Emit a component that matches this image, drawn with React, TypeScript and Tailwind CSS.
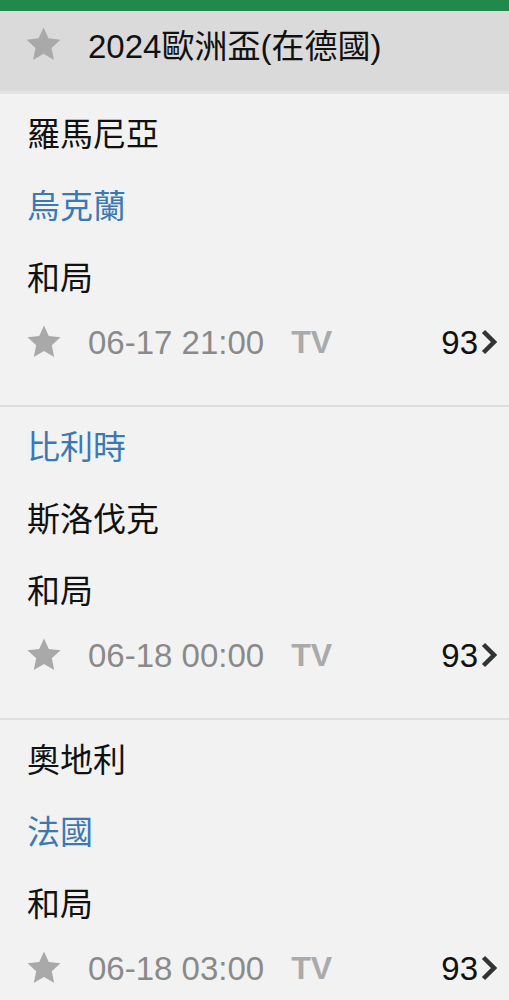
const matches = [
  { home: "羅馬尼亞", away: "烏克蘭", homeWin: false, time: "06-17 21:00" },
  { home: "比利時", away: "斯洛伐克", homeWin: true, time: "06-18 00:00" },
  { home: "奧地利", away: "法國", homeWin: false, time: "06-18 03:00" },
];

const StarIcon = ({ className }: { className?: string }) => (
  <svg viewBox="0 0 24 24" className={className}>
    <polygon
      points="12,1 15.2,8 23,8.9 17.2,14.2 18.8,22 12,18 5.2,22 6.8,14.2 1,8.9 8.8,8"
      fill="#a9a9a9"
    />
  </svg>
);

const Chevron = () => (
  <svg viewBox="0 0 16 26" className="w-[16px] h-[26px]">
    <polyline
      points="2.5,2.5 13,13 2.5,23.5"
      fill="none"
      stroke="#333"
      strokeWidth="4.5"
    />
  </svg>
);

const MatchBlock = ({
  home,
  away,
  homeWin,
  time,
  last,
}: {
  home: string;
  away: string;
  homeWin: boolean;
  time: string;
  last: boolean;
}) => (
  <div className={`pt-[4px] pb-[35px] ${last ? "" : "border-b-2 border-[#dedede]"}`}>
    <div className={`h-[72px] flex items-center pl-[27px] ${homeWin ? "text-[#3b78b6]" : "text-[#111]"}`}>
      {home}
    </div>
    <div className={`h-[72px] flex items-center pl-[27px] ${homeWin ? "text-[#111]" : "text-[#3b78b6]"}`}>
      {away}
    </div>
    <div className="h-[72px] flex items-center pl-[27px] text-[#111]">和局</div>
    <div className="h-[56px] flex items-center pl-[26px] pr-[12px]">
      <StarIcon className="w-[36px] h-[36px]" />
      <span className="ml-[26px] text-[#8a8a8a]">{time}</span>
      <span className="ml-[27px] font-bold text-[#aaaaaa] text-[32px]">TV</span>
      <span className="ml-auto text-[#111]">93</span>
      <span className="ml-[3px] flex items-center">
        <Chevron />
      </span>
    </div>
  </div>
);

export default function App() {
  return (
    <div
      className="w-[509px] h-[1000px] overflow-hidden bg-[#f2f2f2] text-[33px] leading-[33px]"
      style={{ fontFamily: '"Liberation Sans", "Noto Sans CJK TC", sans-serif' }}
    >
      <div className="h-[11px] bg-[#1f8a4c]" />
      <div className="h-[83px] bg-[#dadada] border-b-[3px] border-[#e3e3e3] flex items-start pt-[15px] pl-[25px]">
        <StarIcon className="w-[37px] h-[37px]" />
        <span className="ml-[26px] mt-[4px] text-[#111]">2024歐洲盃(在德國)</span>
      </div>
      {matches.map((m, i) => (
        <MatchBlock key={i} {...m} last={i === matches.length - 1} />
      ))}
    </div>
  );
}
